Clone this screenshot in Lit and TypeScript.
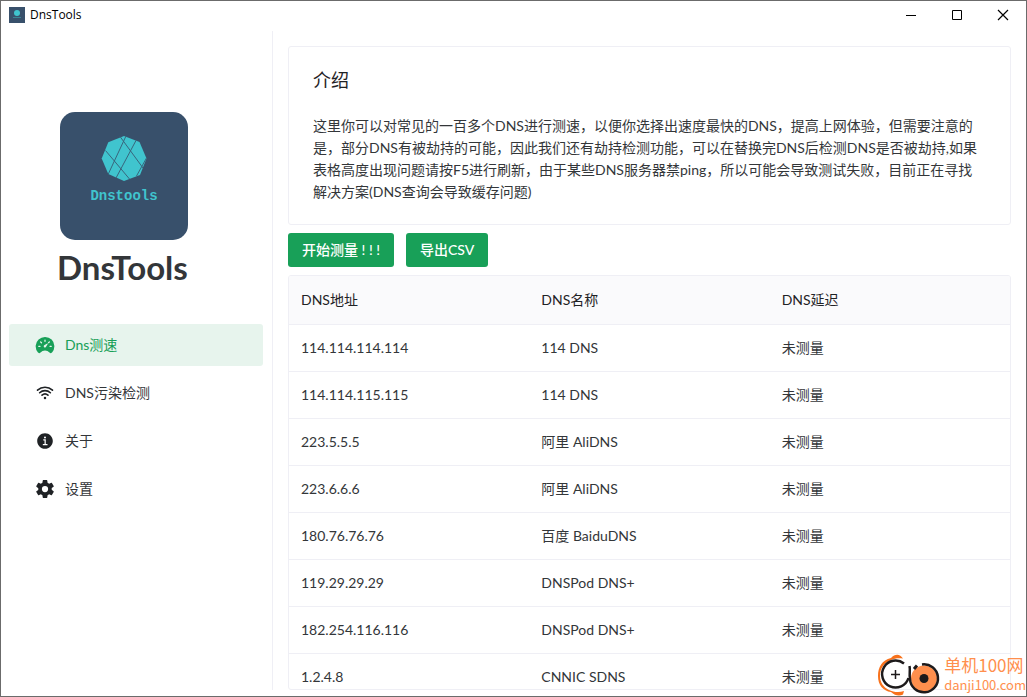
import { LitElement, html, css, svg } from "lit";
import { customElement, property, state } from "lit/decorators.js";
import { classMap } from "lit/directives/class-map.js";

interface MenuEntry {
  id: string;
  label: string;
}

interface DnsServer {
  address: string;
  name: string;
  delay: string;
}

const MENU: MenuEntry[] = [
  { id: "speed", label: "Dns测速" },
  { id: "wifi", label: "DNS污染检测" },
  { id: "info", label: "关于" },
  { id: "settings", label: "设置" },
];

const SERVERS: DnsServer[] = [
  { address: "114.114.114.114", name: "114 DNS", delay: "未测量" },
  { address: "114.114.115.115", name: "114 DNS", delay: "未测量" },
  { address: "223.5.5.5", name: "阿里 AliDNS", delay: "未测量" },
  { address: "223.6.6.6", name: "阿里 AliDNS", delay: "未测量" },
  { address: "180.76.76.76", name: "百度 BaiduDNS", delay: "未测量" },
  { address: "119.29.29.29", name: "DNSPod DNS+", delay: "未测量" },
  { address: "182.254.116.116", name: "DNSPod DNS+", delay: "未测量" },
  { address: "1.2.4.8", name: "CNNIC SDNS", delay: "未测量" },
];

const ICONS: Record<string, unknown> = {
  speed: svg`<path fill="currentColor" d="M425.7 118.25A240 240 0 0 0 76.32 447l.18.2c.33.35.64.71 1 1.05.74.84 1.58 1.79 2.57 2.78a41.17 41.17 0 0 0 60.36-.42 157.13 157.13 0 0 1 231.26 0 41.18 41.18 0 0 0 60.65.06l3.21-3.5.18-.2a239.93 239.93 0 0 0-10-328.76zM240 128a16 16 0 0 1 32 0v32a16 16 0 0 1-32 0zM128 304H96a16 16 0 0 1 0-32h32a16 16 0 0 1 0 32zm48.8-95.2a16 16 0 0 1-22.62 0l-22.63-22.62a16 16 0 0 1 22.63-22.63l22.62 22.63a16 16 0 0 1 0 22.62zm149.3 23.1-47.5 75.5a31 31 0 0 1-7 7 30.11 30.11 0 0 1-35-49l75.5-47.5a10.23 10.23 0 0 1 11.7 0 10.06 10.06 0 0 1 2.3 14zm31.72-23.1a16 16 0 0 1-22.62-22.62l22.62-22.63a16 16 0 0 1 22.63 22.63zM416 304h-32a16 16 0 0 1 0-32h32a16 16 0 0 1 0 32z"/>`,
  wifi: svg`<g fill="none" stroke="currentColor" stroke-width="42" stroke-linecap="round" stroke-linejoin="round"><path d="M332.41 310.59a115 115 0 0 0-152.8 0"/><path d="M393.46 249.54a201.26 201.26 0 0 0-274.92 0"/><path d="M447.72 182.11a288 288 0 0 0-383.44 0"/></g><circle cx="256" cy="384" r="32" fill="currentColor"/>`,
  info: svg`<path fill="currentColor" d="M256 56C145.72 56 56 145.72 56 256s89.72 200 200 200 200-89.72 200-200S366.28 56 256 56zm0 82a26 26 0 1 1-26 26 26 26 0 0 1 26-26zm64 226H200v-32h44v-88h-32v-32h64v120h44z"/>`,
  settings: svg`<path fill="currentColor" fill-rule="evenodd" d="M256 176a80 80 0 1 0 80 80 80.24 80.24 0 0 0-80-80zm172.72 80a165.53 165.53 0 0 1-1.64 22.34l48.69 38.15a11.59 11.59 0 0 1 2.63 14.78l-46.06 79.52a11.64 11.64 0 0 1-14.14 4.93l-57.25-23a176.56 176.56 0 0 1-38.82 22.67l-8.56 60.78a11.93 11.93 0 0 1-11.51 9.86h-92.12a12 12 0 0 1-11.51-9.53l-8.56-60.78A169.3 169.3 0 0 1 151.05 393L93.8 416a11.64 11.64 0 0 1-14.14-4.92L33.6 331.57a11.59 11.59 0 0 1 2.63-14.78l48.69-38.15A174.58 174.58 0 0 1 83.28 256a165.53 165.53 0 0 1 1.64-22.34l-48.69-38.15a11.59 11.59 0 0 1-2.63-14.78l46.06-79.52a11.64 11.64 0 0 1 14.14-4.93l57.25 23a176.56 176.56 0 0 1 38.82-22.67l8.56-60.78A11.93 11.93 0 0 1 209.94 26h92.12a12 12 0 0 1 11.51 9.53l8.56 60.78A169.3 169.3 0 0 1 361 119l57.2-23a11.64 11.64 0 0 1 14.14 4.92l46.06 79.52a11.59 11.59 0 0 1-2.63 14.78l-48.69 38.15a174.58 174.58 0 0 1 1.64 22.63z"/>`,
};

@customElement("title-bar")
class TitleBar extends LitElement {
  static styles = css`
    :host {
      display: flex;
      align-items: center;
      box-sizing: border-box;
      height: 30px;
      padding: 0 0 2px 8px;
      background: #fff;
      color: #000;
    }
    .mark {
      width: 16px;
      height: 16px;
      flex: none;
    }
    .name {
      flex: 1;
      margin-left: 5px;
      font: 12px/16px "Open Sans", "Noto Sans CJK SC", sans-serif;
    }
    .control {
      width: 46px;
      height: 28px;
      padding: 0;
      border: 0;
      background: none;
      color: inherit;
      display: grid;
      place-items: center;
    }
    .glyph {
      width: 12px;
      height: 12px;
      display: block;
    }
  `;

  render() {
    return html`
      <svg class="mark" viewBox="0 0 16 16" aria-hidden="true">
        <rect width="16" height="16" fill="#38506b" />
        <circle cx="8" cy="6" r="3" fill="#40c4ce" />
        <path d="M4 10.5h8" stroke="#3a8492" />
      </svg>
      <span class="name">DnsTools</span>
      <button class="control" aria-label="最小化">
        <svg class="glyph" viewBox="0 0 12 12"><path d="M1 6.5h10" stroke="currentColor" /></svg>
      </button>
      <button class="control" aria-label="最大化">
        <svg class="glyph" viewBox="0 0 12 12"><path d="M1.500 1.500h9v9h-9z" fill="none" stroke="currentColor" /></svg>
      </button>
      <button class="control" aria-label="关闭">
        <svg class="glyph" viewBox="0 0 12 12"><path d="M1 1l10 10M11 1l-10 10" stroke="currentColor" stroke-width="1.200" /></svg>
      </button>
    `;
  }
}

@customElement("side-nav")
class SideNav extends LitElement {
  @property() active = "speed";

  static styles = css`
    :host {
      display: block;
      box-sizing: border-box;
      width: 272px;
      flex: none;
      padding: 81px 9px 0 8px;
      border-right: 1px solid #efeff5;
    }
    .brand {
      display: flex;
      flex-direction: column;
      align-items: flex-start;
      padding-left: 48px;
    }
    .logo {
      width: 128px;
      height: 128px;
      margin-left: 3px;
    }
    .logo-text {
      font: bold 14px "Liberation Mono", monospace;
    }
    .title {
      margin: 0;
      color: #333639;
      font-size: 33px;
      line-height: 54px;
      font-weight: 700;
    }
    .menu {
      display: flex;
      flex-direction: column;
      gap: 6px;
      margin-top: 30px;
    }
    .item {
      display: flex;
      align-items: center;
      gap: 10px;
      height: 42px;
      padding-left: 26px;
      border-radius: 3px;
      color: #333639;
      text-decoration: none;
    }
    .icon {
      width: 20px;
      height: 20px;
      color: #1f2225;
    }
    .current {
      background: #e7f4ed;
      color: #18a058;
    }
    .current .icon {
      color: #18a058;
    }
  `;

  render() {
    return html`
      <div class="brand">
        <svg class="logo" viewBox="0 0 128 128" role="img" aria-label="Dnstools">
          <rect width="128" height="128" rx="15" fill="#38506b" />
          <path d="M64 24l15.500 6L86.500 46.500 80 63 64 69 48.300 62 41.700 46.500 48.300 30.300z" fill="#40c4ce" />
          <path
            d="M60 24.500L83 56M45.500 38.500L69.500 67M66 24L48.300 62M76 28.500L56 66M86.500 46L76.500 64"
            fill="none" stroke="#38667d" stroke-width="1" />
          <text class="logo-text" x="64" y="88" text-anchor="middle" fill="#40c4ce">Dnstools</text>
        </svg>
        <h1 class="title">DnsTools</h1>
      </div>
      <nav class="menu">
        ${MENU.map(
          (entry) => html`
            <a
              href="#${entry.id}"
              class=${classMap({ item: true, current: entry.id === this.active })}
              @click=${() => this.dispatchEvent(new CustomEvent("navigate", { detail: entry.id }))}
            >
              <svg class="icon" viewBox="0 0 512 512" aria-hidden="true">${ICONS[entry.id]}</svg>
              <span>${entry.label}</span>
            </a>
          `,
        )}
      </nav>
    `;
  }
}

@customElement("dns-table")
class DnsTable extends LitElement {
  @property({ attribute: false }) rows: DnsServer[] = [];

  static styles = css`
    :host {
      display: block;
      overflow: hidden;
      border: 1px solid #efeff5;
      border-radius: 3px;
    }
    .table {
      width: 100%;
      table-layout: fixed;
      border-collapse: separate;
      border-spacing: 0;
      font-size: 14px;
      line-height: 22px;
    }
    .head,
    .cell {
      padding: 12px;
      border-bottom: 1px solid #efeff5;
      text-align: left;
      font-weight: 400;
    }
    .head {
      background: #fafafc;
      color: #1f2225;
      line-height: 24px;
    }
    .cell {
      color: #333639;
    }
  `;

  render() {
    return html`
      <table class="table">
        <thead>
          <tr>
            <th class="head" scope="col">DNS地址</th>
            <th class="head" scope="col">DNS名称</th>
            <th class="head" scope="col">DNS延迟</th>
          </tr>
        </thead>
        <tbody>
          ${this.rows.map(
            (row) => html`
              <tr>
                <td class="cell">${row.address}</td>
                <td class="cell">${row.name}</td>
                <td class="cell">${row.delay}</td>
              </tr>
            `,
          )}
        </tbody>
      </table>
    `;
  }
}

@customElement("site-stamp")
class SiteStamp extends LitElement {
  static styles = css`
    :host {
      display: flex;
      align-items: center;
      gap: 2px;
      color: #ff8f4d;
    }
    .emblem {
      width: 64px;
      height: 42px;
    }
    .words {
      display: flex;
      flex-direction: column;
      font-family: "Noto Sans CJK SC", sans-serif;
    }
    .site {
      font-size: 17px;
      line-height: 20px;
    }
    .domain {
      font-size: 13px;
      line-height: 20px;
    }
  `;

  render() {
    return html`
      <svg class="emblem" viewBox="0 0 64 42" aria-hidden="true">
        <path d="M25 4.500C22-.5 17-.5 13 4 4 6 0 13 0 22c0 9 5 15 13 16 4 4 9 4 12 2.500l1-3.500c-5 2-11 1-15-1C5 33 2 28 2 22 2 14 6 9 13 6c4-2 8-2 12-1.500z" fill="#f8721c" />
        <circle cx="17.500" cy="20.500" r="14" fill="#fff" />
        <path d="M26 9.500A13.500 13.500 0 1 0 30.500 24" fill="none" stroke="#1d1a1b" stroke-width="2.500" />
        <path d="M17.500 16v9M13 20.500h9" stroke="#1d1a1b" stroke-width="1.500" />
        <circle cx="46" cy="24.500" r="13" fill="#ff8f4d" />
        <path d="M31.500 12c1 4-.5 8 .5 13a14 14 0 1 0 12-14.500" fill="none" stroke="#1d1a1b" stroke-width="2.500" />
        <path d="M36 15l3-3.500" stroke="#1d1a1b" stroke-width="3" />
        <circle cx="46" cy="24.500" r="4.500" fill="#1d1a1b" />
      </svg>
      <div class="words">
        <span class="site">单机100网</span>
        <span class="domain">danji100.com</span>
      </div>
    `;
  }
}

@customElement("app-root")
class AppRoot extends LitElement {
  @state() private page = "speed";

  static styles = css`
    :host {
      display: flex;
      flex-direction: column;
      box-sizing: border-box;
      height: 100vh;
      position: relative;
      overflow: hidden;
      border: 1px solid #6b6b6b;
      background: #fff;
      color: #333639;
      font-family: Lato, "Noto Sans CJK SC", sans-serif;
      font-size: 14px;
      line-height: 22px;
    }
    .body {
      display: flex;
      flex: 1;
      min-height: 0;
      padding-bottom: 6px;
    }
    .main {
      display: flex;
      flex-direction: column;
      gap: 8px;
      flex: 1;
      min-width: 0;
      padding: 15px 15px 0;
    }
    .card {
      padding: 19px 24px 21px;
      border: 1px solid #efeff5;
      border-radius: 3px;
    }
    .heading {
      margin: 0 0 20px;
      color: #1f2225;
      font-size: 18px;
      line-height: 29px;
      font-weight: 400;
    }
    .text {
      margin: 0;
    }
    .actions {
      display: flex;
      gap: 12px;
    }
    .action {
      height: 34px;
      padding: 0 14px;
      border: 0;
      border-radius: 3px;
      background: #18a058;
      color: #fff;
      font: inherit;
      font-weight: 500;
    }
    .list {
      flex: 1;
      min-height: 0;
    }
    .stamp {
      position: absolute;
      right: 0;
      bottom: 0;
    }
  `;

  render() {
    return html`
      <title-bar></title-bar>
      <div class="body">
        <side-nav
          .active=${this.page}
          @navigate=${(event: CustomEvent<string>) => (this.page = event.detail)}
        ></side-nav>
        <main class="main">
          <section class="card">
            <h2 class="heading">介绍</h2>
            <p class="text">这里你可以对常见的一百多个DNS进行测速，以便你选择出速度最快的DNS，提高上网体验，但需要注意的是，部分DNS有被劫持的可能，因此我们还有劫持检测功能，可以在替换完DNS后检测DNS是否被劫持,如果表格高度出现问题请按F5进行刷新，由于某些DNS服务器禁ping，所以可能会导致测试失败，目前正在寻找解决方案(DNS查询会导致缓存问题)</p>
          </section>
          <div class="actions">
            <button class="action">开始测量 ! ! !</button>
            <button class="action">导出CSV</button>
          </div>
          <dns-table class="list" .rows=${SERVERS}></dns-table>
        </main>
      </div>
      <site-stamp class="stamp"></site-stamp>
    `;
  }
}
